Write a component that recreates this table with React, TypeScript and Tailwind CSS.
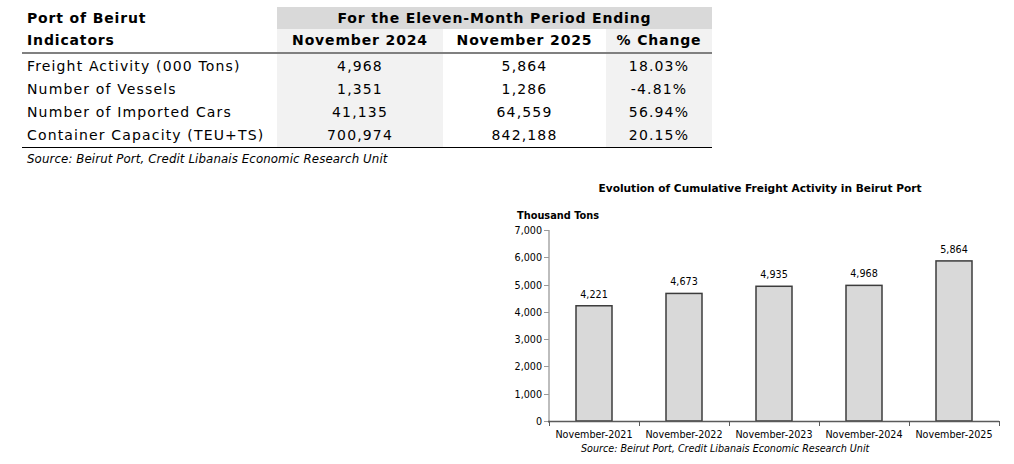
const rows = [
  { label: "Freight Activity (000 Tons)", a: "4,968", b: "5,864", c: "18.03%" },
  { label: "Number of Vessels", a: "1,351", b: "1,286", c: "-4.81%" },
  { label: "Number of Imported Cars", a: "41,135", b: "64,559", c: "56.94%" },
  { label: "Container Capacity (TEU+TS)", a: "700,974", b: "842,188", c: "20.15%" },
];

const bars = [
  { year: "November-2021", value: 4221 },
  { year: "November-2022", value: 4673 },
  { year: "November-2023", value: 4935 },
  { year: "November-2024", value: 4968 },
  { year: "November-2025", value: 5864 },
];

const ticks = [0, 1000, 2000, 3000, 4000, 5000, 6000, 7000];

// chart geometry (svg coords, origin at page x=510 y=200)
const x0 = 39;
const y0 = 221;
const scale = 0.0273;
const step = 90;

function Chart() {
  return (
    <svg width="500" height="264" className="block" style={{ fontFamily: '"DejaVu Sans", Verdana, sans-serif' }}>
      <text x="7" y="19" fontSize="9.8" fontWeight="bold" fill="#000">
        Thousand Tons
      </text>
      {/* y axis */}
      <line x1={x0} y1={y0 - 7000 * scale} x2={x0} y2={y0 + 2} stroke="#bdbdbd" strokeWidth="2" />
      {ticks.map((t) => {
        const y = Math.round(y0 - t * scale) + 0.5;
        return (
          <g key={t}>
            <line x1={x0 - 5} y1={y} x2={x0} y2={y} stroke="#9a9a9a" strokeWidth="1" />
            <text x={x0 - 7} y={y + 3.5} fontSize="9.6" textAnchor="end" fill="#000">
              {t.toLocaleString("en-US")}
            </text>
          </g>
        );
      })}
      {/* bars */}
      {bars.map((b, i) => {
        const h = b.value * scale;
        const cx = x0 + step / 2 + step * i;
        return (
          <g key={b.year}>
            <rect x={cx - 18} y={y0 - h} width="36" height={h} fill="#d9d9d9" stroke="#3c3c3c" strokeWidth="1.5" />
            <text x={cx} y={y0 - h - 8} fontSize="9.6" textAnchor="middle" fill="#000">
              {b.value.toLocaleString("en-US")}
            </text>
            <text x={cx} y="238" fontSize="9.6" textAnchor="middle" fill="#000">
              {b.year}
            </text>
          </g>
        );
      })}
      {/* x axis */}
      <line x1={x0 - 1} y1={y0 + 0.5} x2={x0 + step * 5} y2={y0 + 0.5} stroke="#5a5a5a" strokeWidth="1.5" />
      {[0, 1, 2, 3, 4, 5].map((i) => (
        <line key={i} x1={x0 + step * i + 0.5} y1={y0} x2={x0 + step * i + 0.5} y2={y0 + 5} stroke="#5a5a5a" strokeWidth="1" />
      ))}
      <text x="71" y="252" fontSize="9.6" fontStyle="italic" fill="#000">
        Source: Beirut Port, Credit Libanais Economic Research Unit
      </text>
    </svg>
  );
}

export default function App() {
  return (
    <div className="w-[1014px] h-[464px] bg-white overflow-hidden" style={{ fontFamily: '"DejaVu Sans", Verdana, sans-serif' }}>
      <div className="h-[176px] pt-[7px] pl-[22px]">
        <div className="w-[690px] text-[14px] tracking-[0.85px] text-black">
          {/* header */}
          <div className="flex">
            <div className="w-[255px] pl-[5px] font-bold leading-[22px]">
              <div className="h-[22px]">Port of Beirut</div>
              <div className="h-[23px] leading-[23px]">Indicators</div>
            </div>
            <div className="flex-1 font-bold">
              <div className="h-[22px] bg-[#d9d9d9] text-center leading-[22px]">For the Eleven-Month Period Ending</div>
              <div className="flex h-[23px] leading-[23px] text-center">
                <div className="w-[166px] bg-[#f2f2f2]">November 2024</div>
                <div className="w-[163px]">November 2025</div>
                <div className="flex-1 bg-[#f2f2f2]">% Change</div>
              </div>
            </div>
          </div>
          <div className="h-[2px] bg-[#808080]" />
          <div className="h-[1px] flex">
            <div className="w-[255px]" />
            <div className="w-[166px] bg-[#f2f2f2]" />
            <div className="w-[163px]" />
            <div className="flex-1 bg-[#f2f2f2]" />
          </div>
          {rows.map((r) => (
            <div key={r.label} className="flex h-[23px] leading-[23px] tracking-[1.15px]">
              <div className="w-[255px] pl-[5px] whitespace-nowrap">{r.label}</div>
              <div className="w-[166px] bg-[#f2f2f2] text-center">{r.a}</div>
              <div className="w-[163px] text-center">{r.b}</div>
              <div className="flex-1 bg-[#f2f2f2] text-center">{r.c}</div>
            </div>
          ))}
          <div className="h-[1px] bg-black" />
          <div className="pl-[5px] pt-[4px] text-[11.8px] italic tracking-[0.1px] leading-[14px]">
            Source: Beirut Port, Credit Libanais Economic Research Unit
          </div>
        </div>
      </div>
      <div className="ml-[510px] w-[500px]">
        <div className="h-[24px] text-center text-[10.6px] font-bold leading-[24px]">
          Evolution of Cumulative Freight Activity in Beirut Port
        </div>
        <Chart />
      </div>
    </div>
  );
}
